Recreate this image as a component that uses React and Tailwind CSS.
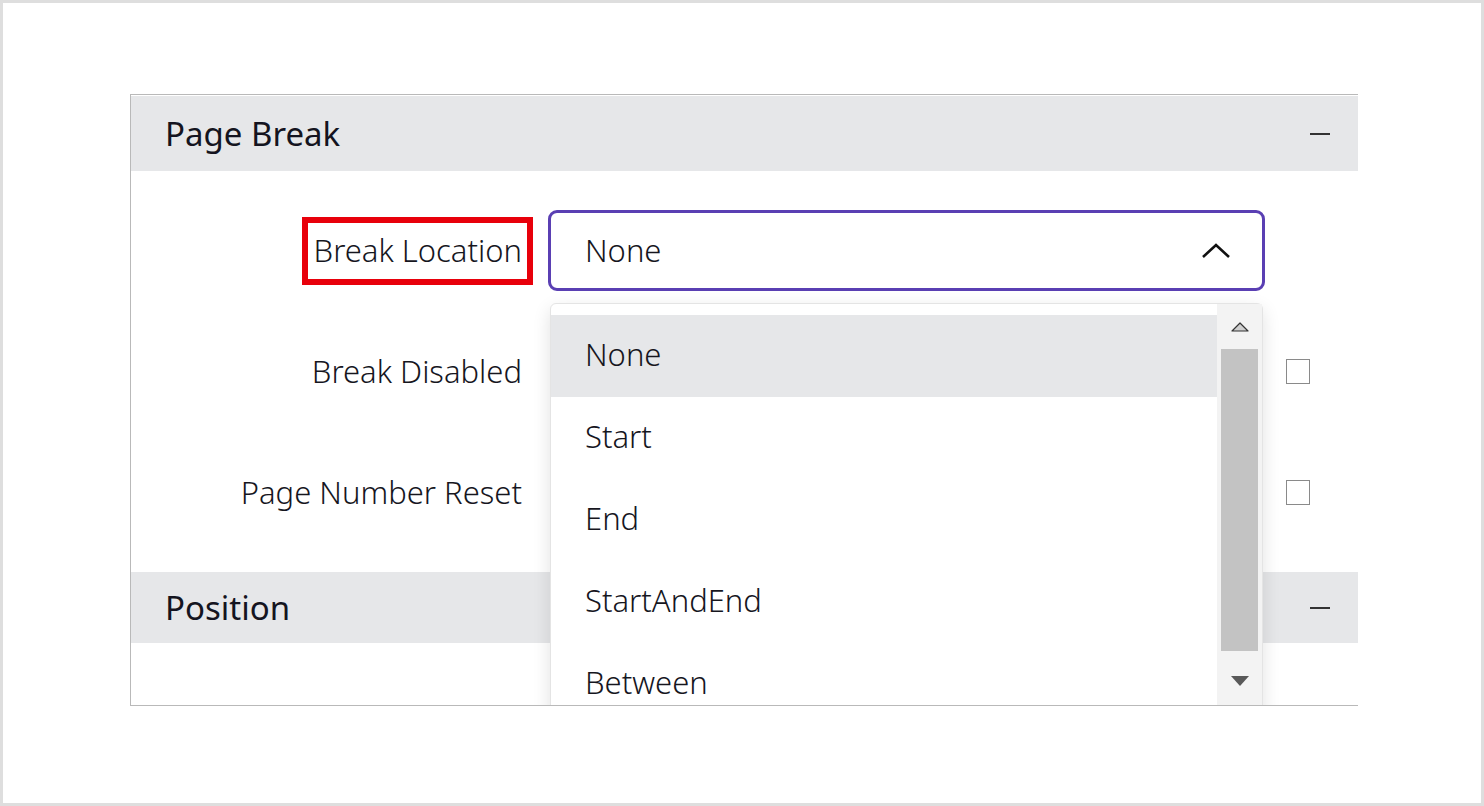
import React from "react";

const options = ["None", "Start", "End", "StartAndEnd", "Between"];

function Minus() {
  return <span className="block w-[20px] h-[2px] bg-[#333]" />;
}

function SectionHeader({ title, height }) {
  return (
    <div className={`flex items-center justify-between bg-[#e6e7e9] pl-[34px] pr-[28px] ${height}`}>
      <span className="text-[33px] text-[#141420]">{title}</span>
      <Minus />
    </div>
  );
}

function Label({ text, marked }) {
  return (
    <div className="w-[402px] flex justify-end">
      <span
        className={`pl-[6px] pr-[5px] pt-[3px] pb-[5px] border-[6px] text-[31px] font-light leading-[48px] text-[#16161e] ${
          marked ? "border-[#e8000b]" : "border-transparent"
        }`}
      >
        {text}
      </span>
    </div>
  );
}

function Checkbox() {
  return <span className="block w-[24px] h-[25px] border-[1.5px] border-[#8a8a8a] bg-white" />;
}

function Dropdown() {
  return (
    <div className="absolute left-[2px] top-[93px] w-[713px] h-[420px] bg-white border border-[#e4e4e4] rounded-[6px] shadow-[0_6px_18px_rgba(0,0,0,0.12)] flex z-10">
      <div className="flex-1 pt-[11px]">
        {options.map((opt, i) => (
          <div
            key={opt}
            className={`h-[82px] flex items-center pl-[34px] pb-[3px] text-[31px] font-light text-[#16161e] ${
              i === 0 ? "bg-[#e6e7e9]" : ""
            }`}
          >
            {opt}
          </div>
        ))}
      </div>
      {/* scrollbar */}
      <div className="w-[45px] bg-[#f3f3f3] flex flex-col items-center">
        <div className="h-[45px] flex items-center justify-center">
          <svg width="18" height="11" viewBox="0 0 18 11">
            <path d="M1 10 L9 2 L17 10 Z" fill="#cfcfcf" stroke="#333" strokeWidth="1.2" strokeLinejoin="round" />
          </svg>
        </div>
        <div className="w-[37px] h-[302px] bg-[#c3c3c3]" />
        <div className="h-[60px] flex items-center justify-center">
          <svg width="20" height="12" viewBox="0 0 20 12">
            <path d="M1 1 L19 1 L10 11 Z" fill="#595959" />
          </svg>
        </div>
      </div>
    </div>
  );
}

export default function App() {
  return (
    <div
      className="w-[1484px] h-[806px] border-[3px] border-[#dedede] bg-white pl-[127px] pt-[91px]"
      style={{ fontFamily: '"Noto Sans", "Open Sans", sans-serif' }}
    >
      <div className="w-[1228px] h-[612px] border-t border-l border-b border-[#b9b9b9] overflow-hidden pt-[1px]">
        <SectionHeader title="Page Break" height="h-[75px]" />

        <div className="pt-[39px] flex flex-col gap-[40px]">
          <div className="h-[81px] flex items-center">
            <Label text="Break Location" marked />
            <div className="relative ml-[15px]">
              <div className="w-[717px] h-[81px] border-[3px] border-[#5a3fb3] rounded-[9px] flex items-center justify-between pl-[34px] pr-[31px]">
                <span className="text-[31px] font-light text-[#16161e]">None</span>
                <svg width="30" height="16" viewBox="0 0 30 16">
                  <path d="M2 14 L15 2 L28 14" fill="none" stroke="#111" strokeWidth="2.6" />
                </svg>
              </div>
              <Dropdown />
            </div>
          </div>

          <div className="h-[81px] flex items-center">
            <Label text="Break Disabled" />
            <div className="w-[717px] ml-[15px]" />
            <div className="ml-[21px]">
              <Checkbox />
            </div>
          </div>

          <div className="h-[81px] flex items-center">
            <Label text="Page Number Reset" />
            <div className="w-[717px] ml-[15px]" />
            <div className="ml-[21px]">
              <Checkbox />
            </div>
          </div>
        </div>

        <div className="mt-[39px]">
          <SectionHeader title="Position" height="h-[71px]" />
        </div>
      </div>
    </div>
  );
}
